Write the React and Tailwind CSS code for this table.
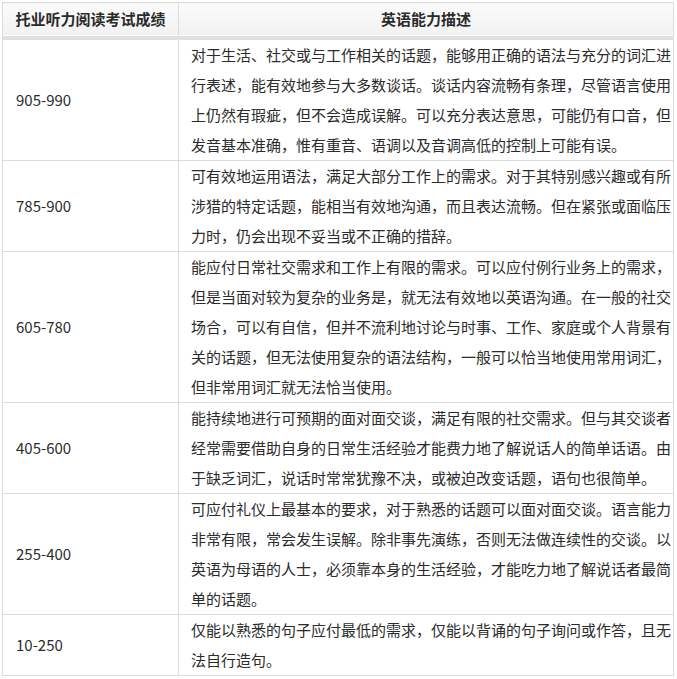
import React from "react";

const ROWS = [
  {
    score: "905-990",
    text: "对于生活、社交或与工作相关的话题，能够用正确的语法与充分的词汇进行表述，能有效地参与大多数谈话。谈话内容流畅有条理，尽管语言使用上仍然有瑕疵，但不会造成误解。可以充分表达意思，可能仍有口音，但发音基本准确，惟有重音、语调以及音调高低的控制上可能有误。",
  },
  {
    score: "785-900",
    text: "可有效地运用语法，满足大部分工作上的需求。对于其特别感兴趣或有所涉猎的特定话题，能相当有效地沟通，而且表达流畅。但在紧张或面临压力时，仍会出现不妥当或不正确的措辞。",
  },
  {
    score: "605-780",
    text: "能应付日常社交需求和工作上有限的需求。可以应付例行业务上的需求，但是当面对较为复杂的业务是，就无法有效地以英语沟通。在一般的社交场合，可以有自信，但并不流利地讨论与时事、工作、家庭或个人背景有关的话题，但无法使用复杂的语法结构，一般可以恰当地使用常用词汇，但非常用词汇就无法恰当使用。",
  },
  {
    score: "405-600",
    text: "能持续地进行可预期的面对面交谈，满足有限的社交需求。但与其交谈者经常需要借助自身的日常生活经验才能费力地了解说话人的简单话语。由于缺乏词汇，说话时常常犹豫不决，或被迫改变话题，语句也很简单。",
  },
  {
    score: "255-400",
    text: "可应付礼仪上最基本的要求，对于熟悉的话题可以面对面交谈。语言能力非常有限，常会发生误解。除非事先演练，否则无法做连续性的交谈。以英语为母语的人士，必须靠本身的生活经验，才能吃力地了解说话者最简单的话题。",
  },
  {
    score: "10-250",
    text: "仅能以熟悉的句子应付最低的需求，仅能以背诵的句子询问或作答，且无法自行造句。",
  },
];

export default function App() {
  return (
    <div className="w-[677px] h-[679px] bg-white pl-[2px] pt-[2px] font-['Microsoft_YaHei','Noto_Sans_CJK_SC',sans-serif] text-[15px] text-[#2b2b2b]">
      <table className="w-[672px] table-fixed border-collapse">
        <colgroup>
          <col className="w-[176px]" />
          <col />
        </colgroup>
        <thead>
          <tr>
            <th className="h-[35px] p-0 text-center font-bold border border-[#dcdcdc] border-b-4 border-b-[#e0e0e0] bg-gradient-to-b from-[#fbfbfb] to-[#f1f1f1] shadow-[inset_0_-1px_0_#ffffff] leading-[30px]">
              托业听力阅读考试成绩
            </th>
            <th className="h-[35px] p-0 text-center font-bold border border-[#dcdcdc] border-b-4 border-b-[#e0e0e0] bg-gradient-to-b from-[#fbfbfb] to-[#f1f1f1] shadow-[inset_0_-1px_0_#ffffff] leading-[30px]">
              英语能力描述
            </th>
          </tr>
        </thead>
        <tbody>
          {ROWS.map((row) => (
            <tr key={row.score}>
              <td className="border border-[#dcdcdc] pl-[13px] py-0 align-middle leading-[30px]">
                {row.score}
              </td>
              <td className="border border-[#dcdcdc] pl-[12px] pr-0 py-0 align-middle leading-[30px] break-all">
                {row.text}
              </td>
            </tr>
          ))}
        </tbody>
      </table>
    </div>
  );
}
